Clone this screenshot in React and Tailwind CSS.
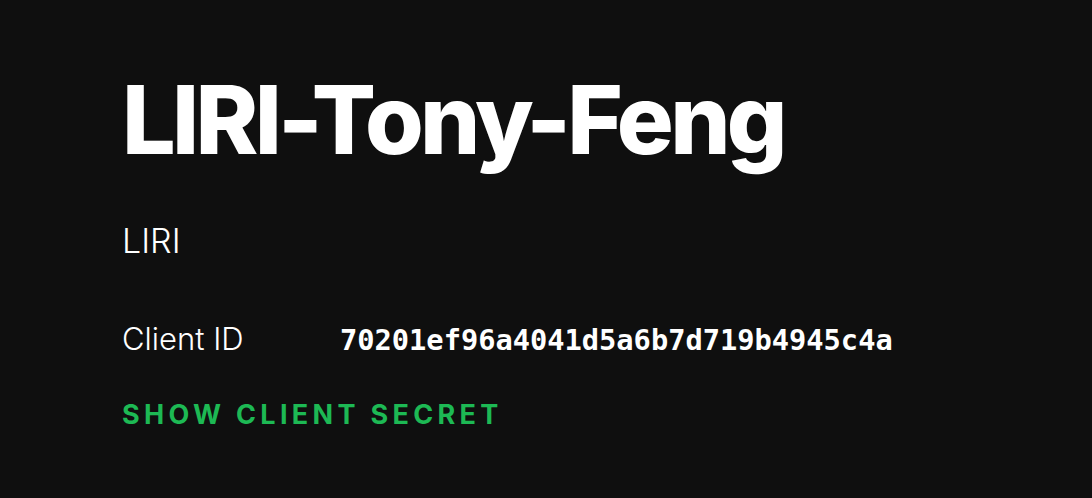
export default function App() {
  return (
    <main className="min-h-screen w-full bg-[#0f0f0f] pl-[122px] pt-[72px] text-white" style={{ fontFamily: 'Inter, "Noto Sans", sans-serif' }}>
      <h1 className="text-[95px] font-extrabold leading-none tracking-[-0.039em]">LIRI-Tony-Feng</h1>

      <p className="mt-[57px] text-[34px] font-light leading-none">LIRI</p>

      {/* client credentials */}
      <div className="mt-[65px] flex items-baseline">
        <span className="w-[218px] text-[31px] font-light leading-none">Client ID</span>
        <span className="text-[28.7px] font-bold leading-none" style={{ fontFamily: '"DejaVu Sans Mono", monospace' }}>
          70201ef96a4041d5a6b7d719b4945c4a
        </span>
      </div>

      <button type="button" className="mt-[46px] block text-[27px] font-bold uppercase leading-none tracking-[0.16em] text-[#1db954]">
        Show client secret
      </button>
    </main>
  )
}
